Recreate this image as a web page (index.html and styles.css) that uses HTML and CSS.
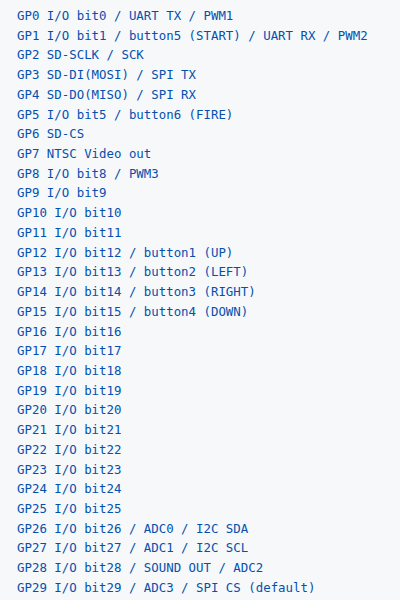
FILE: index.html
```html
<!DOCTYPE html>
<html>
<head>
<meta charset="utf-8">
<link rel="stylesheet" href="styles.css">
</head>
<body>
<pre class="code">GP0 I/O bit0 / UART TX / PWM1
GP1 I/O bit1 / button5 (START) / UART RX / PWM2
GP2 SD-SCLK / SCK
GP3 SD-DI(MOSI) / SPI TX
GP4 SD-DO(MISO) / SPI RX
GP5 I/O bit5 / button6 (FIRE)
GP6 SD-CS
GP7 NTSC Video out
GP8 I/O bit8 / PWM3
GP9 I/O bit9
GP10 I/O bit10
GP11 I/O bit11
GP12 I/O bit12 / button1 (UP)
GP13 I/O bit13 / button2 (LEFT)
GP14 I/O bit14 / button3 (RIGHT)
GP15 I/O bit15 / button4 (DOWN)
GP16 I/O bit16
GP17 I/O bit17
GP18 I/O bit18
GP19 I/O bit19
GP20 I/O bit20
GP21 I/O bit21
GP22 I/O bit22
GP23 I/O bit23
GP24 I/O bit24
GP25 I/O bit25
GP26 I/O bit26 / ADC0 / I2C SDA
GP27 I/O bit27 / ADC1 / I2C SCL
GP28 I/O bit28 / SOUND OUT / ADC2
GP29 I/O bit29 / ADC3 / SPI CS (default)</pre>
</body>
</html>
```
FILE: styles.css
```css
html, body {
  margin: 0;
  padding: 0;
  background: #f6f8fa;
  height: 100%;
  overflow: hidden;
}
.code {
  margin: 0;
  padding: 6px 0 0 17px;
  font-family: "DejaVu Sans Mono", "Liberation Mono", monospace;
  font-size: 12.4px;
  line-height: 19.72px;
  color: #0550ae;
  white-space: pre;
}
```
